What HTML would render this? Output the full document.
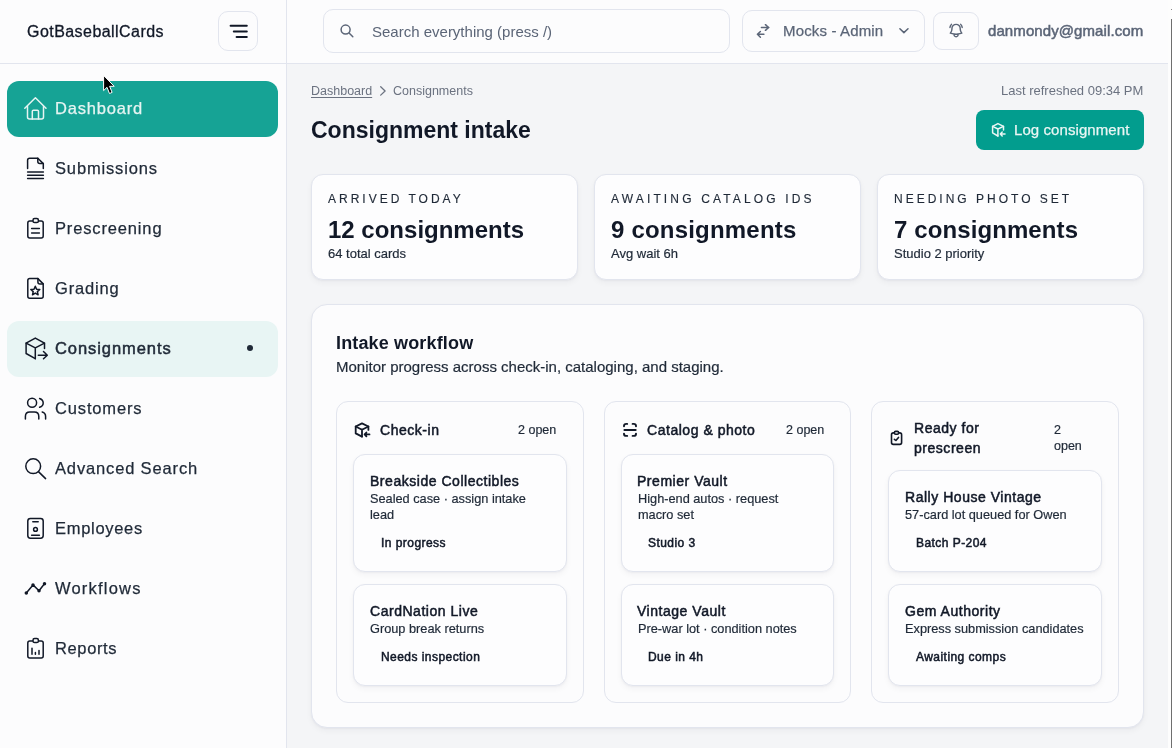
<!DOCTYPE html>
<html><head><meta charset="utf-8">
<style>
*{box-sizing:border-box;margin:0;padding:0}
html,body{width:1172px;height:748px;overflow:hidden}
body{position:relative;background:#f4f5f7;font-family:"Liberation Sans",sans-serif;color:#111827}
.a{position:absolute}
.t{position:absolute;white-space:nowrap;line-height:20px;will-change:transform}
.m{-webkit-text-stroke:0.25px currentColor}
svg{position:absolute;overflow:visible}
.sb{left:0;top:0;width:287px;height:748px;background:#fcfcfd;border-right:1px solid #e2e5ee}
.tb{left:287px;top:0;width:881px;height:64px;background:#fcfcfd;border-bottom:1px solid #e2e5ee}
.sbh{left:0;top:63px;width:287px;height:1px;background:#e2e5ee}
.nav{font-size:16.5px;letter-spacing:0.85px;color:#1f2937;left:55px;-webkit-text-stroke:0.25px currentColor}
.box{position:absolute;border:1px solid #e2e5ee;background:#fcfcfd}
.card{position:absolute;border:1px solid #e2e5ee;background:#fdfdfe;border-radius:12px;box-shadow:0 1px 2px rgba(15,23,42,0.04),0 3px 6px rgba(15,23,42,0.04)}
.lbl{font-size:12px;letter-spacing:3px;color:#1f2937;-webkit-text-stroke:0.15px currentColor}
.val{font-size:24px;font-weight:700;color:#111827}
.sub{font-size:13px;color:#1f2937;-webkit-text-stroke:0.2px currentColor}
.ct{font-size:14px;color:#111827;letter-spacing:0.53px;-webkit-text-stroke:0.5px currentColor}
.cs{font-size:12.75px;color:#1f2937;line-height:16.2px;-webkit-text-stroke:0.2px currentColor}
.cb{font-size:12px;color:#111827;line-height:16px;letter-spacing:0.45px;-webkit-text-stroke:0.5px currentColor}
.ic{stroke:#111827;fill:none;stroke-width:1.5;stroke-linecap:round;stroke-linejoin:round}
</style></head><body>

<!-- Sidebar -->
<div class="a sb"></div>
<div class="a sbh"></div>
<div class="t m" style="left:27px;top:21.8px;font-size:16px;letter-spacing:0.45px;color:#111827;-webkit-text-stroke:0.3px currentColor">GotBaseballCards</div>
<div class="a" style="left:218px;top:11px;width:40px;height:40px;border:1px solid #e2e5ee;border-radius:10px;background:#fcfcfd"></div>
<svg style="left:0;top:0" width="1" height="1"><g class="ic" style="stroke-width:2">
<path d="M230.6 25.7H246.8M233.8 31.4H246.8M236.6 37.1H246.8"/></g></svg>

<!-- Active nav -->
<div class="a" style="left:7px;top:81px;width:271px;height:56px;border-radius:12px;background:#16a395"></div>
<div class="a" style="left:7px;top:321px;width:271px;height:56px;border-radius:12px;background:#e8f5f4"></div>

<div class="t nav" style="top:98px;color:#e6f4f2;letter-spacing:0.8px">Dashboard</div>
<div class="t nav" style="top:157.6px">Submissions</div>
<div class="t nav" style="top:217.6px">Prescreening</div>
<div class="t nav" style="top:277.6px">Grading</div>
<div class="t nav" style="top:337.6px;letter-spacing:0.93px;-webkit-text-stroke:0.5px currentColor">Consignments</div>
<div class="t nav" style="top:397.6px">Customers</div>
<div class="t nav" style="top:457.6px">Advanced Search</div>
<div class="t nav" style="top:517.6px;letter-spacing:0.7px">Employees</div>
<div class="t nav" style="top:577.6px;letter-spacing:1.2px">Workflows</div>
<div class="t nav" style="top:637.6px;letter-spacing:0.62px">Reports</div>
<div class="a" style="left:246.7px;top:345px;width:6px;height:6px;border-radius:3px;background:#1f2937"></div>

<svg style="left:0;top:0" width="1" height="1">
<g class="ic" style="stroke:#e6f4f2">
<path d="M24.8 108.3L35.4 97.8L46 108.3"/>
<path d="M27.5 106.5V117Q27.5 119 29.5 119H41.5Q43.5 119 43.5 117V106.5"/>
<path d="M32.3 119V111.3Q32.3 110.2 33.4 110.2H37.4Q38.5 110.2 38.5 111.3V119"/>
</g>
<g class="ic">
<!-- submissions -->
<path d="M27.6 168.4V160.3Q27.6 158.2 29.7 158.2H37.8L43.3 163.6V168.4"/>
<path d="M37.8 158.2V161.6Q37.8 163.6 39.8 163.6H43.3"/>
<path d="M27.6 171.9H43.4M27.6 175.2H43.4M27.6 178.5H43.4"/>
<!-- prescreening -->
<path d="M32.6 220.9H29.8Q27.8 220.9 27.8 222.9V236Q27.8 238 29.8 238H41.2Q43.2 238 43.2 236V222.9Q43.2 220.9 41.2 220.9H38.6"/>
<rect x="33" y="218.6" width="5.4" height="3.9" rx="1.6"/>
<path d="M31.6 228.4H39.4M31.6 232.9H39.4"/>
<!-- grading -->
<path d="M37.9 278.6H29.8Q27.8 278.6 27.8 280.6V296.2Q27.8 298.2 29.8 298.2H41.2Q43.2 298.2 43.2 296.2V283.9Z"/>
<path d="M37.9 278.6V281.9Q37.9 283.9 39.9 283.9H43.2"/>
<path d="M35.3 286.3L36.6 289.2L39.8 289.5L37.4 291.6L38.1 294.8L35.3 293.1L32.5 294.8L33.2 291.6L30.8 289.5L34 289.2Z"/>
<!-- consignments -->
<path d="M44.5 348.6V343.2L35.3 338.1L26.1 343.2V353.5L35.3 358.7"/>
<path d="M26.1 343.2L35.3 347.9L44.5 343.2M35.3 347.9V358.7"/>
<path d="M38.3 355.2H47.3M43.5 351.5L47.3 355.2L43.5 358.8"/>
<!-- customers -->
<circle cx="32.1" cy="402.8" r="4.5"/>
<path d="M39.6 398.5Q43.2 399.8 43.2 402.9Q43.2 406 39.6 407.3"/>
<path d="M25.4 418.9V416.5Q25.4 412.1 29.8 412.1H34.4Q38.8 412.1 38.8 416.5V418.9"/>
<path d="M42.2 412Q45.6 413 45.6 416.5V418.9"/>
<!-- search -->
<circle cx="33.2" cy="466.2" r="7.4"/>
<path d="M38.7 471.9L45.6 478.6"/>
<!-- employees -->
<rect x="27.8" y="518.4" width="15.4" height="19.8" rx="2.6"/>
<path d="M32.8 521.7H38.2M31.6 535.3H39.4"/>
<circle cx="35.5" cy="529.4" r="1.9"/>
<!-- workflows -->
<path d="M26.3 592.9L33 584.9L39 590.7L44.5 583.7"/>
<circle cx="26.3" cy="592.9" r="1" style="fill:#111827"/>
<circle cx="33" cy="584.9" r="1" style="fill:#111827"/>
<circle cx="39" cy="590.7" r="1" style="fill:#111827"/>
<circle cx="44.5" cy="583.7" r="1" style="fill:#111827"/>
<!-- reports -->
<path d="M32.6 640.9H29.8Q27.8 640.9 27.8 642.9V656Q27.8 658 29.8 658H41.2Q43.2 658 43.2 656V642.9Q43.2 640.9 41.2 640.9H38.6"/>
<rect x="33" y="638.6" width="5.4" height="3.9" rx="1.6"/>
<path d="M32 648.2V654.2M35.4 652.6V654.2M39 650.6V654.2"/>
</g>
</svg>

<!-- cursor -->
<svg style="left:0;top:0" width="1" height="1">
<path d="M103.6 75.4V90.6L107 87.3L109.5 93.5L112.1 92.4L109.6 86.3H114.2Z" fill="#000" stroke="#fff" stroke-width="1" stroke-linejoin="round"/>
</svg>

<!-- Topbar -->
<div class="a tb"></div>
<div class="a" style="left:323px;top:9px;width:407px;height:44px;border:1px solid #e2e5ee;border-radius:10px;background:#fcfcfd"></div>
<div class="t" style="left:371.6px;top:21.6px;font-size:15px;color:#5b6577">Search everything (press /)</div>
<div class="a" style="left:742px;top:10px;width:183px;height:42px;border:1px solid #e2e5ee;border-radius:10px;background:#fcfcfd"></div>
<div class="t m" style="left:782.6px;top:20.6px;font-size:15px;letter-spacing:0.15px;color:#5b6577">Mocks - Admin</div>
<div class="a" style="left:933px;top:12px;width:46px;height:38px;border:1px solid #e2e5ee;border-radius:9px;background:#fcfcfd"></div>
<div class="t" style="left:987.5px;top:20.8px;font-size:15px;letter-spacing:0.09px;-webkit-text-stroke:0.5px currentColor;color:#5b6577">danmondy@gmail.com</div>
<svg style="left:0;top:0" width="1" height="1"><g class="ic" style="stroke:#5b6577">
<circle cx="345.6" cy="29.6" r="4.5"/><path d="M349.3 33.3L352.8 36.8"/>
<path d="M761.4 27.5H768.8M765.4 24.7L768.8 27.5L765.4 30.3"/>
<path d="M763.9 34.3H757.4M760.4 31.5L757.4 34.3L760.4 37.2"/>
<path d="M899.9 28.7L903.9 32.6L908 28.7"/>
<g transform="translate(947.8 22.3) scale(0.69)" style="stroke-width:2.1"><path d="M14.857 17.082a23.848 23.848 0 0 0 5.454-1.31A8.967 8.967 0 0 1 18 9.75V9A6 6 0 0 0 6 9v.75a8.967 8.967 0 0 1-2.312 6.022c1.733.64 3.56 1.085 5.455 1.31m5.714 0a24.255 24.255 0 0 1-5.714 0m5.714 0a3 3 0 1 1-5.714 0M3.124 7.5A8.969 8.969 0 0 1 5.292 3m13.416 0a8.969 8.969 0 0 1 2.168 4.5"/></g>
</g></svg>

<!-- scrollbar -->
<div class="a" style="left:1168px;top:0;width:4px;height:748px;background:#fdfdfd"></div>
<div class="a" style="left:1171px;top:19px;width:1px;height:729px;background:#6f6f6f"></div>
<div class="a" style="left:1171px;top:9px;width:1px;height:1px;background:#8a8a8a"></div>

<!-- Main header -->
<div class="t" style="left:311px;top:80.7px;font-size:12.5px;color:#6b7280;text-decoration:underline;text-underline-offset:2px">Dashboard</div>
<svg style="left:0;top:0" width="1" height="1"><g class="ic" style="stroke:#6b7280;stroke-width:1.3">
<path d="M380.7 86.8L385.1 90.95L380.7 95.1"/></g></svg>
<div class="t" style="left:393px;top:80.7px;font-size:12.5px;color:#6b7280">Consignments</div>
<div class="t" style="right:29px;top:81.1px;font-size:13px;color:#6b7280">Last refreshed 09:34 PM</div>
<div class="t" style="left:311px;top:119.6px;font-size:23px;font-weight:700;color:#111827">Consignment intake</div>

<div class="a" style="left:976px;top:110px;width:168px;height:40px;border-radius:8px;background:#029d8e"></div>
<div class="t m" style="left:1014px;top:119.8px;font-size:15px;letter-spacing:0.08px;color:#eaf6f4">Log consignment</div>
<svg style="left:0;top:0" width="1" height="1"><g class="ic" style="stroke:#eaf6f4;stroke-width:1.5">
<path d="M1003.5 129.9V126.4L997.9 123.6L992.6 126.4V132.8L997.9 136"/>
<path d="M992.6 126.4L997.9 129L1003.5 126.4M997.9 129V136"/>
<path d="M1005 134H1000.3M1002.2 132L1000.3 134L1002.2 136"/>
</g></svg>

<!-- Stat cards -->
<div class="card" style="left:311px;top:174px;width:267px;height:106px"></div>
<div class="card" style="left:594px;top:174px;width:267px;height:106px"></div>
<div class="card" style="left:877px;top:174px;width:267px;height:106px"></div>
<div class="t lbl" style="left:328px;top:188.6px">ARRIVED TODAY</div>
<div class="t val" style="left:328px;top:220.2px">12 consignments</div>
<div class="t sub" style="left:328px;top:244.3px">64 total cards</div>
<div class="t lbl" style="left:611px;top:188.6px;letter-spacing:3.15px">AWAITING CATALOG IDS</div>
<div class="t val" style="left:611px;top:220.2px;letter-spacing:0.2px">9 consignments</div>
<div class="t sub" style="left:611px;top:244.3px">Avg wait 6h</div>
<div class="t lbl" style="left:894px;top:188.6px">NEEDING PHOTO SET</div>
<div class="t val" style="left:894px;top:220.2px;letter-spacing:0.1px">7 consignments</div>
<div class="t sub" style="left:894px;top:244.3px">Studio 2 priority</div>

<!-- Workflow panel -->
<div class="card" style="left:311px;top:304px;width:833px;height:424px;border-radius:16px;background:#fcfcfd"></div>
<div class="t" style="left:336px;top:332.8px;font-size:18px;font-weight:700;letter-spacing:0.15px;color:#111827">Intake workflow</div>
<div class="t" style="left:336px;top:356.6px;font-size:15px;color:#1f2937;-webkit-text-stroke:0.2px currentColor">Monitor progress across check-in, cataloging, and staging.</div>

<div class="box" style="left:336px;top:401px;width:248px;height:302px;border-radius:12px"></div>
<div class="box" style="left:604px;top:401px;width:247px;height:302px;border-radius:12px"></div>
<div class="box" style="left:871px;top:401px;width:248px;height:302px;border-radius:12px"></div>

<!-- col1 -->
<div class="t ct" style="left:379.5px;top:419.6px">Check-in</div>
<div class="t" style="left:517.5px;top:419.7px;font-size:12.5px;color:#1f2937;-webkit-text-stroke:0.2px currentColor">2 open</div>
<svg style="left:0;top:0" width="1" height="1"><g class="ic" style="stroke-width:1.8">
<path d="M368.4 429.9V426.5L362 423.4L355.7 426.5V433.4L362 436.6"/>
<path d="M355.7 426.5L362 429.7L368.4 426.5M362 429.7V436.6"/>
<path d="M369.5 434.4H364.6M366.4 432.5L364.6 434.4L366.4 436.4"/>
</g></svg>
<div class="card" style="left:353px;top:454px;width:214px;height:118px"></div>
<div class="t ct" style="left:369.5px;top:470.8px">Breakside Collectibles</div>
<div class="t cs" style="left:370.0px;top:491.1px">Sealed case · assign intake<br>lead</div>
<div class="t cb" style="left:380.5px;top:534.9px">In progress</div>
<div class="card" style="left:353px;top:584px;width:214px;height:102px"></div>
<div class="t ct" style="left:369.5px;top:600.9px">CardNation Live</div>
<div class="t cs" style="left:370.0px;top:621.1px">Group break returns</div>
<div class="t cb" style="left:380.5px;top:648.5px">Needs inspection</div>

<!-- col2 -->
<div class="t ct" style="left:647px;top:419.6px">Catalog &amp; photo</div>
<div class="t" style="left:785.5px;top:419.7px;font-size:12.5px;color:#1f2937;-webkit-text-stroke:0.2px currentColor">2 open</div>
<svg style="left:0;top:0" width="1" height="1"><g class="ic" style="stroke-width:1.9">
<path d="M624 426.3V425.9Q624 423.9 626.4 423.9H627.2M632.6 423.9H633.6Q636 423.9 636 425.9V426.3"/>
<path d="M624 433.6V434Q624 435.9 626.4 435.9H627.2M632.6 435.9H633.6Q636 435.9 636 434V433.6"/>
<path d="M624.4 430H635.7"/>
</g></svg>
<div class="card" style="left:621px;top:454px;width:213px;height:118px"></div>
<div class="t ct" style="left:637.0px;top:470.8px">Premier Vault</div>
<div class="t cs" style="left:637.5px;top:491.1px">High-end autos · request<br>macro set</div>
<div class="t cb" style="left:648px;top:534.9px">Studio 3</div>
<div class="card" style="left:621px;top:584px;width:213px;height:102px"></div>
<div class="t ct" style="left:637.0px;top:600.9px">Vintage Vault</div>
<div class="t cs" style="left:637.5px;top:621.1px">Pre-war lot · condition notes</div>
<div class="t cb" style="left:648px;top:648.5px">Due in 4h</div>

<!-- col3 -->
<div class="t ct" style="left:914px;top:418.5px;line-height:19.5px">Ready for<br>prescreen</div>
<div class="t" style="left:1054.2px;top:422px;font-size:12.5px;color:#1f2937;line-height:16px;-webkit-text-stroke:0.2px currentColor">2<br>open</div>
<svg style="left:0;top:0" width="1" height="1"><g class="ic" style="stroke-width:1.6">
<path d="M894.3 432.9H893.3Q891.5 432.9 891.5 434.7V442.6Q891.5 444.4 893.3 444.4H899.8Q901.6 444.4 901.6 442.6V434.7Q901.6 432.9 899.8 432.9H898.7"/>
<rect x="894.4" y="431.4" width="4.2" height="2.8" rx="1.2"/>
<path d="M894.4 439.3L895.9 440.5L898.5 437.4"/>
</g></svg>
<div class="card" style="left:888px;top:470px;width:214px;height:102px"></div>
<div class="t ct" style="left:904.5px;top:486.8px">Rally House Vintage</div>
<div class="t cs" style="left:905.0px;top:507.1px">57-card lot queued for Owen</div>
<div class="t cb" style="left:915.5px;top:534.6px">Batch P-204</div>
<div class="card" style="left:888px;top:584px;width:214px;height:102px"></div>
<div class="t ct" style="left:904.5px;top:600.9px">Gem Authority</div>
<div class="t cs" style="left:905.0px;top:621.1px">Express submission candidates</div>
<div class="t cb" style="left:915.5px;top:648.5px">Awaiting comps</div>

</body></html>
